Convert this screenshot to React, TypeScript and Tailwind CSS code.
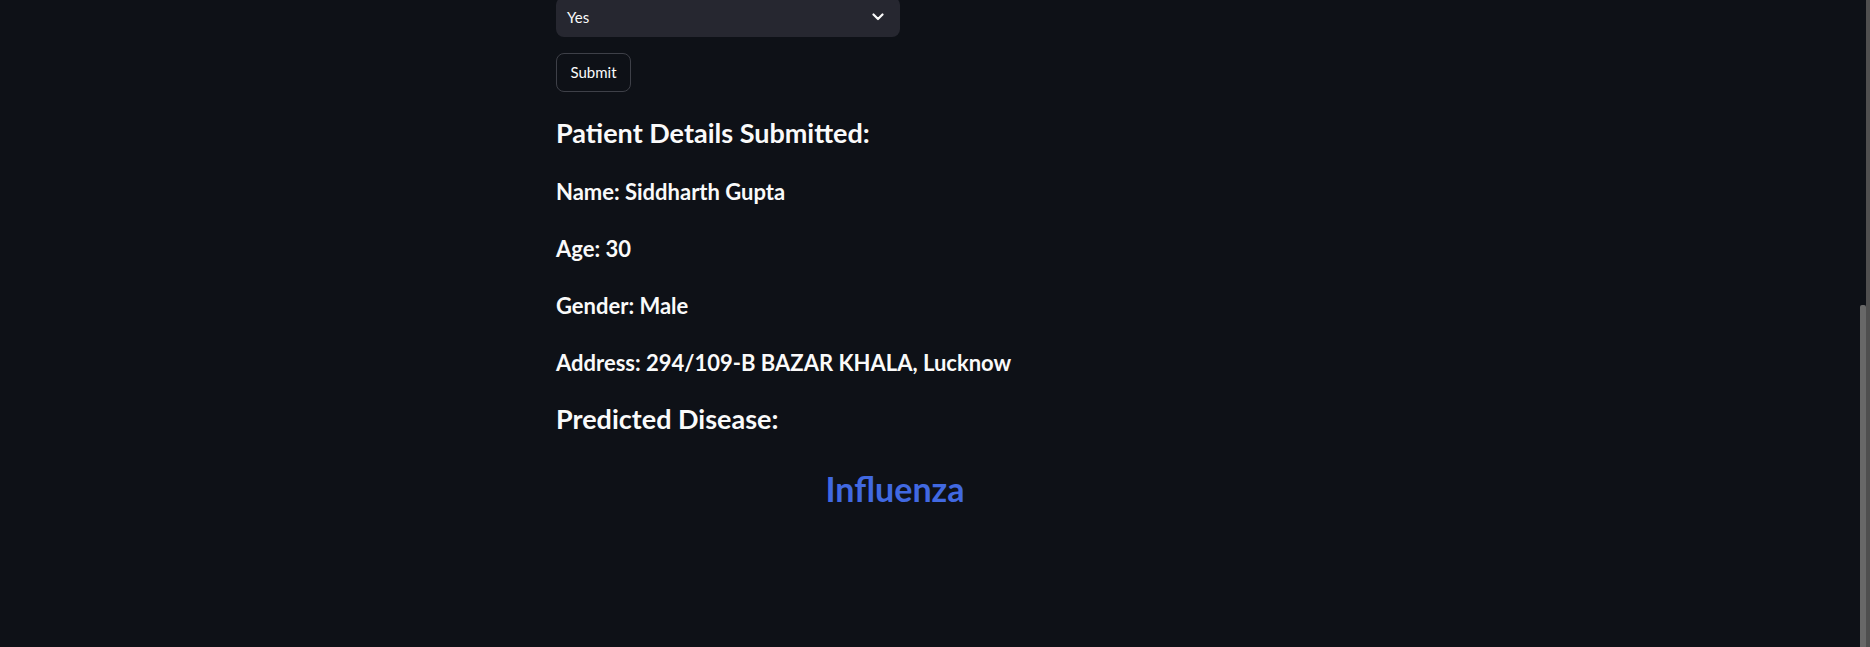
import React from "react";

export default function App() {
  const font = { fontFamily: '"Lato", "Noto Sans", sans-serif' };
  return (
    <div
      className="relative h-[647px] w-full overflow-hidden bg-[#0e1117] text-[#fafafa] font-['Lato',_'Noto_Sans',_sans-serif]"
      style={font}
    >
      <div className="pl-[556px]">
        <div className="w-[678px]">
          {/* select */}
          <div className="-mt-[3px] flex h-[40px] w-[344px] items-center justify-between rounded-[8px] bg-[#262730] pl-[11px] pr-[16px]">
            <span className="text-[15px] leading-none">Yes</span>
            <svg width="12" height="8" viewBox="0 0 12 8" fill="none">
              <path d="M1.5 1.5 L6 6 L10.5 1.5" stroke="#fafafa" strokeWidth="2.2" strokeLinecap="round" strokeLinejoin="round" />
            </svg>
          </div>

          {/* submit */}
          <button className="mt-[16px] flex h-[39px] w-[75px] items-center justify-center rounded-[8px] border border-[#3e4048] bg-[#0e1117] text-[15px] text-[#fafafa]">
            Submit
          </button>

          <h3 className="mt-[21px] text-[27px] font-bold leading-[40px]">Patient Details Submitted:</h3>

          <div className="mt-[10px]">
            <p className="text-[22px] font-bold leading-[57px]">Name: Siddharth Gupta</p>
            <p className="text-[22px] font-bold leading-[57px]">Age: 30</p>
            <p className="text-[22px] font-bold leading-[57px]">Gender: Male</p>
            <p className="text-[22px] font-bold leading-[57px]">Address: 294/109-B BAZAR KHALA, Lucknow</p>
          </div>

          <h3 className="mt-[8px] text-[27px] font-bold leading-[40px]">Predicted Disease:</h3>

          <p className="mt-[26px] text-center text-[34px] font-bold leading-[48px] text-[#4169e1]">Influenza</p>
        </div>
      </div>

      {/* scrollbar */}
      <div className="absolute right-0 top-0 h-full w-[4px] bg-[#4f4f4f]" />
      <div className="absolute right-[4px] top-[305px] h-[342px] w-[6px] rounded-t-[2px] bg-[#686868]" />
    </div>
  );
}
